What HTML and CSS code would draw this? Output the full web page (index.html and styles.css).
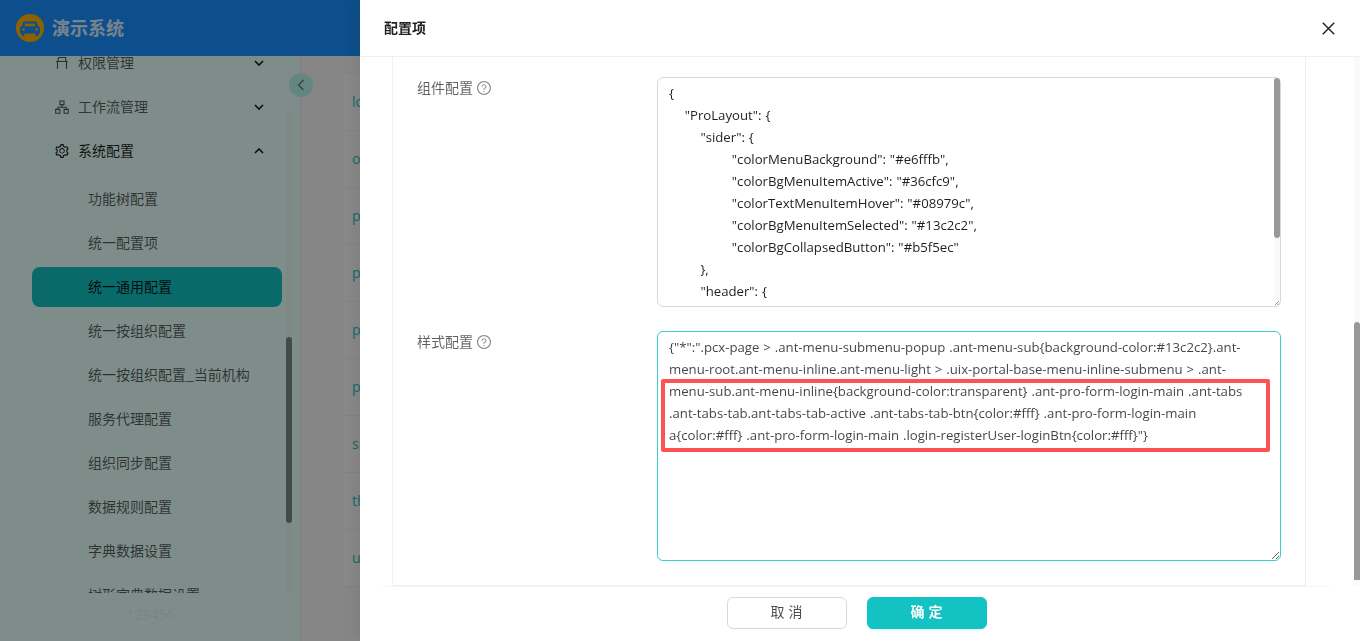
FILE: index.html
```html
<!DOCTYPE html>
<html lang="zh-CN">
<head>
<meta charset="utf-8">
<title>配置项</title>
<link rel="stylesheet" href="styles.css">
</head>
<body>
<div class="app">
  <header class="topbar">
    <svg class="logo" viewBox="0 0 28 28"><circle cx="14" cy="14" r="14" fill="#ffb300"/><path fill="#1890ff" d="M8.6 7.6h10.800c.7 0 1.200.4 1.500 1l1.400 3.700c1 .3 1.700 1.200 1.700 2.300v4.200c0 .4-.3.7-.7.7h-.8v1.600c0 .5-.4.9-.9.9h-1.200c-.5 0-.9-.4-.9-.9v-1.600H8.500v1.600c0 .5-.4.9-.9.9H6.400c-.5 0-.9-.4-.9-.9v-1.600h-.8c-.4 0-.7-.3-.7-.7v-4.200c0-1.100.7-2 1.700-2.300l1.400-3.700c.3-.6.8-1 1.500-1zm.7 1.900-1 2.700h11.400l-1-2.700zM7.500 14.200a1.400 1.400 0 1 0 0 2.800 1.400 1.400 0 0 0 0-2.800zm13 0a1.400 1.400 0 1 0 0 2.800 1.400 1.400 0 0 0 0-2.800z"/></svg>
    <span class="brand">演示系统</span>
  </header>
  <div class="workspace">
    <aside class="sider">
      <nav class="menu-scroll">
        <ul class="menu">
          <li class="menu-group">
            <svg class="menu-icon" viewBox="0 0 14 14"><path d="M3.200 1.500h7.600v4M1 5.500h12M3.200 5.500v-4M2.500 5.500V13M11.500 5.500V13" fill="none" stroke="currentColor" stroke-width="1.100"/></svg>
            <span>权限管理</span>
            <svg class="chev" viewBox="0 0 10 6"><path d="M1 1l4 4 4-4" fill="none" stroke="currentColor" stroke-width="1.700"/></svg>
          </li>
          <li class="menu-group">
            <svg class="menu-icon" viewBox="0 0 14 14"><path d="M5 1h4v3.600H5zM.7 9.400h4.200v3.800H.7zM9.100 9.400h4.200v3.800H9.100zM7 4.600v2.600M2.800 9.400V7.200h8.400v2.200" fill="none" stroke="currentColor" stroke-width="1.100"/></svg>
            <span>工作流管理</span>
            <svg class="chev" viewBox="0 0 10 6"><path d="M1 1l4 4 4-4" fill="none" stroke="currentColor" stroke-width="1.700"/></svg>
          </li>
          <li class="menu-group is-open">
            <svg class="menu-icon" viewBox="64 64 896 896"><path fill="currentColor" d="M924.800 625.700l-65.500-56c3.100-19 4.700-38.400 4.700-57.800s-1.600-38.800-4.700-57.800l65.500-56a32.030 32.030 0 0 0 9.300-35.200l-.9-2.600a443.740 443.740 0 0 0-79.700-137.900l-1.800-2.100a32.120 32.120 0 0 0-35.100-9.500l-81.300 28.900c-30-24.600-63.500-44-99.700-57.600l-15.700-85a32.050 32.050 0 0 0-25.800-25.700l-2.700-.5c-52.100-9.400-106.900-9.400-159 0l-2.700.5a32.050 32.050 0 0 0-25.800 25.700l-15.800 85.400a351.860 351.860 0 0 0-99 57.400l-81.900-29.100a32 32 0 0 0-35.100 9.500l-1.800 2.100a446.020 446.020 0 0 0-79.700 137.900l-.9 2.600c-4.500 12.500-.8 26.500 9.300 35.200l66.300 56.600c-3.100 18.800-4.600 38-4.600 57.100 0 19.200 1.500 38.400 4.600 57.100L99 625.500a32.030 32.030 0 0 0-9.300 35.200l.9 2.600c18.100 50.400 44.900 96.900 79.700 137.900l1.800 2.100a32.120 32.120 0 0 0 35.100 9.500l81.900-29.100c29.800 24.500 63.100 43.900 99 57.400l15.800 85.400a32.050 32.050 0 0 0 25.800 25.700l2.700.5a449.400 449.400 0 0 0 159 0l2.700-.5a32.050 32.050 0 0 0 25.800-25.700l15.700-85a350 350 0 0 0 99.700-57.600l81.300 28.900a32 32 0 0 0 35.100-9.500l1.800-2.100c34.800-41.100 61.600-87.500 79.700-137.900l.9-2.600c4.500-12.300.8-26.300-9.300-35zM788.300 465.900c2.500 15.100 3.800 30.600 3.800 46.100s-1.300 31-3.800 46.100l-6.600 40.100 74.700 63.900a370.030 370.030 0 0 1-42.600 73.600L721 702.800l-31.400 25.800c-23.900 19.600-50.500 35-79.300 45.800l-38.100 14.300-17.900 97a377.500 377.500 0 0 1-85 0l-17.900-97.200-37.800-14.500c-28.500-10.800-55-26.200-78.700-45.700l-31.400-25.900-93.400 33.200c-17-22.900-31.200-47.600-42.600-73.600l75.500-64.500-6.500-40c-2.400-14.900-3.700-30.300-3.700-45.500 0-15.300 1.200-30.600 3.700-45.500l6.500-40-75.500-64.500c11.300-26.100 25.600-50.700 42.600-73.600l93.400 33.200 31.400-25.900c23.700-19.500 50.200-34.900 78.700-45.700l37.900-14.300 17.900-97.200c28.100-3.200 56.800-3.200 85 0l17.900 97 38.100 14.300c28.700 10.800 55.400 26.200 79.300 45.800l31.400 25.800 92.800-32.900c17 22.900 31.200 47.600 42.600 73.600L781.800 426l6.500 39.900zM512 326c-97.200 0-176 78.800-176 176s78.800 176 176 176 176-78.800 176-176-78.800-176-176-176zm83.100 259.100A117.680 117.680 0 0 1 512 619.600c-31.400 0-60.900-12.300-83.100-34.500A117.680 117.680 0 0 1 394.400 502c0-31.400 12.300-60.900 34.500-83.100 22.200-22.200 51.700-34.500 83.100-34.500s60.900 12.300 83.100 34.500A117.680 117.680 0 0 1 629.600 502c0 31.400-12.300 60.900-34.500 83.100z"/></svg>
            <span>系统配置</span>
            <svg class="chev" viewBox="0 0 10 6"><path d="M1 5l4-4 4 4" fill="none" stroke="currentColor" stroke-width="1.700"/></svg>
          </li>
          <li class="menu-item first">功能树配置</li>
          <li class="menu-item">统一配置项</li>
          <li class="menu-item is-selected">统一通用配置</li>
          <li class="menu-item">统一按组织配置</li>
          <li class="menu-item">统一按组织配置_当前机构</li>
          <li class="menu-item">服务代理配置</li>
          <li class="menu-item">组织同步配置</li>
          <li class="menu-item">数据规则配置</li>
          <li class="menu-item">字典数据设置</li>
          <li class="menu-item">树形字典数据设置</li>
        </ul>
      </nav>
      <div class="sider-foot">123456</div>
      <div class="sider-scrollbar"><div class="sider-thumb"></div></div>
      <button class="collapse" type="button" aria-label="收起"><svg viewBox="0 0 8 12"><path d="M6.500 1L1.500 6l5 5" fill="none" stroke="currentColor" stroke-width="1.200"/></svg></button>
    </aside>
    <main class="main">
      <ul class="rows">
        <li>lo</li><li>o</li><li>p</li><li>p</li><li>p</li><li>p</li><li>sr</li><li>th</li><li>u</li>
      </ul>
    </main>
  </div>
</div>
<div class="mask"></div>
<section class="drawer">
  <header class="drawer-head">
    <h2 class="drawer-title">配置项</h2>
    <svg class="close" viewBox="0 0 12 12"><path d="M.7.7l10.600 10.600M11.300.7L.7 11.300" fill="none" stroke="currentColor" stroke-width="1.300"/></svg>
  </header>
  <div class="drawer-body">
    <form class="card">
      <div class="field">
        <label class="field-label"><span class="label-text">组件配置</span>
          <svg class="help" viewBox="64 64 896 896"><path fill="currentColor" d="M512 64C264.600 64 64 264.600 64 512s200.600 448 448 448 448-200.600 448-448S759.400 64 512 64zm0 820c-205.400 0-372-166.600-372-372s166.600-372 372-372 372 166.600 372 372-166.600 372-372 372z"/><path fill="currentColor" d="M623.600 316.700C593.600 290.400 554 276 512 276s-81.600 14.500-111.600 40.700C369.200 344 352 380.700 352 420v7.600c0 4.400 3.600 8 8 8h48c4.400 0 8-3.600 8-8V420c0-44.100 43.100-80 96-80s96 35.900 96 80c0 31.100-22 59.600-56.100 72.700-21.200 8.100-39.200 22.300-52.100 40.900-13.100 19-19.900 41.800-19.900 64.900V620c0 4.400 3.600 8 8 8h48c4.400 0 8-3.600 8-8v-22.700a48.300 48.300 0 0 1 30.900-44.800c59-22.700 97.100-74.700 97.100-132.500.1-39.300-17.100-76-48.300-103.300zM472 732a40 40 0 1 0 80 0 40 40 0 1 0-80 0z"/></svg>
        </label>
        <div class="code-wrap">
          <textarea class="code" spellcheck="false">{
    "ProLayout": {
        "sider": {
                "colorMenuBackground": "#e6fffb",
                "colorBgMenuItemActive": "#36cfc9",
                "colorTextMenuItemHover": "#08979c",
                "colorBgMenuItemSelected": "#13c2c2",
                "colorBgCollapsedButton": "#b5f5ec"
        },
        "header": {
                "colorBgHeader": "#13c2c2",
                "colorHeaderTitle": "#ffffff"
        }
    }
}</textarea>
          <div class="code-scrollbar"><div class="code-thumb"></div></div>
          <svg class="code-grip" viewBox="0 0 6 6"><path d="M1 5l4-4M3.500 5L5 3.500" fill="none" stroke="#777" stroke-width=".8"/></svg>
        </div>
      </div>
      <div class="field">
        <label class="field-label"><span class="label-text">样式配置</span>
          <svg class="help" viewBox="64 64 896 896"><path fill="currentColor" d="M512 64C264.600 64 64 264.600 64 512s200.600 448 448 448 448-200.600 448-448S759.400 64 512 64zm0 820c-205.400 0-372-166.600-372-372s166.600-372 372-372 372 166.600 372 372-166.600 372-372 372z"/><path fill="currentColor" d="M623.600 316.700C593.600 290.400 554 276 512 276s-81.600 14.500-111.600 40.700C369.200 344 352 380.700 352 420v7.600c0 4.400 3.600 8 8 8h48c4.400 0 8-3.600 8-8V420c0-44.100 43.100-80 96-80s96 35.900 96 80c0 31.100-22 59.600-56.100 72.700-21.200 8.100-39.200 22.300-52.100 40.900-13.100 19-19.900 41.800-19.900 64.900V620c0 4.400 3.600 8 8 8h48c4.400 0 8-3.600 8-8v-22.700a48.300 48.300 0 0 1 30.900-44.800c59-22.700 97.100-74.700 97.100-132.500.1-39.300-17.100-76-48.300-103.300zM472 732a40 40 0 1 0 80 0 40 40 0 1 0-80 0z"/></svg>
        </label>
        <div class="code-wrap">
          <textarea class="code is-focus" spellcheck="false">{"*":".pcx-page &gt; .ant-menu-submenu-popup .ant-menu-sub{background-color:#13c2c2}.ant-menu-root.ant-menu-inline.ant-menu-light &gt; .uix-portal-base-menu-inline-submenu &gt; .ant-menu-sub.ant-menu-inline{background-color:transparent} .ant-pro-form-login-main .ant-tabs .ant-tabs-tab.ant-tabs-tab-active .ant-tabs-tab-btn{color:#fff} .ant-pro-form-login-main a{color:#fff} .ant-pro-form-login-main .login-registerUser-loginBtn{color:#fff}"}</textarea>
          <div class="callout"></div>
        </div>
      </div>
    </form>
    <div class="drawer-scrollbar"><div class="drawer-thumb"></div></div>
  </div>
  <footer class="drawer-foot">
    <button class="btn" type="button"><span class="btn-text">取 消</span></button>
    <button class="btn btn-primary" type="button"><span class="btn-text">确 定</span></button>
  </footer>
</section>
</body>
</html>
```
FILE: styles.css
```css
* { box-sizing: border-box; }
html, body { margin: 0; height: 100%; overflow: hidden; }
body {
  font-family: "Open Sans", "Noto Sans CJK SC", sans-serif;
  font-size: 14px;
  color: rgba(0, 0, 0, .88);
  background: #f5f5f5;
}
ul { list-style: none; margin: 0; padding: 0; }

.app { height: 100vh; display: flex; flex-direction: column; }
.topbar { height: 56px; flex: none; background: #1890ff; display: flex; align-items: center; gap: 8px; padding-left: 16px; }
.logo { width: 28px; height: 28px; }
.brand { margin-bottom: 2px; font-size: 18px; font-weight: 700; color: #fff; font-family: "Noto Sans CJK SC", sans-serif; opacity: .85; }

.workspace { flex: 1; min-height: 0; display: flex; }
.sider { width: 301px; flex: none; position: relative; background: #e6fffb; border-right: 1px solid #e8e8e8; display: flex; flex-direction: column; }
.menu-scroll { flex: 1; min-height: 0; overflow: hidden; }
.menu { margin-top: -13px; padding: 0 18px 0 32px; font-family: "Noto Sans CJK SC", sans-serif; color: rgba(0, 0, 0, .65); }
.menu-group { height: 40px; margin-bottom: 4px; padding: 0 18px 0 23px; display: flex; align-items: center; }
.menu-group span { margin: 0 0 2px 9px; flex: 1; }
.menu-group.is-open { color: rgba(0, 0, 0, .88); }
.menu-icon { width: 14px; height: 14px; flex: none; }
.chev { width: 10px; height: 6px; flex: none; color: rgba(0, 0, 0, .88); }
.menu-item { height: 40px; margin-bottom: 4px; padding-left: 56px; line-height: 38px; border-radius: 8px; white-space: nowrap; }
.menu-item.first { margin-top: 8px; }
.menu-item.is-selected { background: #13c2c2; color: rgba(0, 0, 0, .88); }
.sider-foot { height: 48px; flex: none; text-align: center; line-height: 44px; color: rgba(0, 0, 0, .07); }
.sider-scrollbar { position: absolute; left: 286px; top: 56px; width: 6px; height: 481px; border-radius: 3px; background: rgba(0, 0, 0, .02); }
.sider-thumb { margin-top: 225px; height: 186px; border-radius: 3px; background: rgba(0, 0, 0, .45); }
.collapse { position: absolute; left: 289px; top: 17px; width: 24px; height: 24px; padding: 0; border: 0; border-radius: 50%; background: #b5f5ec; color: rgba(0, 0, 0, .5); display: flex; align-items: center; justify-content: center; }
.collapse svg { width: 8px; height: 12px; }

.main { flex: 1; min-width: 0; padding: 17px 0 0 42px; }
.rows { background: #f9f9f9; }
.rows li { height: 57px; line-height: 56px; padding-left: 9px; border-top: 1px solid #f0f0f0; color: #13c2c2; font-size: 14px; }
.rows li:last-child { border-bottom: 1px solid #f0f0f0; height: 58px; }

.mask { position: fixed; inset: 0; background: rgba(0, 0, 0, .45); }
.drawer { position: fixed; top: 0; right: 0; bottom: 0; width: 1000px; background: #fff; display: flex; flex-direction: column; box-shadow: -6px 0 16px rgba(0, 0, 0, .08); }
.drawer-head { height: 57px; flex: none; display: flex; align-items: center; justify-content: space-between; padding: 0 25px 0 24px; border-bottom: 1px solid #f0f0f0; }
.drawer-title { margin: 0 0 2px; font-size: 14px; font-weight: 600; font-family: "Noto Sans CJK SC", sans-serif; }
.close { width: 13px; height: 13px; color: rgba(0, 0, 0, .88); }

.drawer-body { flex: 1; min-height: 0; display: flex; justify-content: space-between; padding-left: 32px; }
.card { width: 914px; padding: 20px 24px 24px; border: 1px solid #f0f0f0; border-top: 0; display: flex; flex-direction: column; gap: 24px; }
.field { display: grid; grid-template-columns: 240px 624px; }
.field-label { display: flex; align-items: center; gap: 4px; height: 22px; color: rgba(0, 0, 0, .62); font-family: "Noto Sans CJK SC", sans-serif; }
.label-text { margin-bottom: 2px; }
.help { width: 14px; height: 14px; color: rgba(0, 0, 0, .45); }
.code-wrap { position: relative; height: 230px; }
.code {
  display: block; width: 624px; height: 230px; padding: 4px 16px 4px 11px;
  border: 1px solid #d9d9d9; border-radius: 6px; outline: 0;
  font: 13.2px/22px "Open Sans", "Noto Sans CJK SC", sans-serif; word-spacing: .5px; color: rgba(0, 0, 0, .88);
  resize: none; overflow: hidden; background: #fff;
}
.code.is-focus { border-color: #36cfc9; resize: both; color: rgba(0, 0, 0, .74); }
.code-scrollbar { position: absolute; right: 1px; top: 1px; width: 6px; height: 222px; background: #fafafa; border-top-right-radius: 5px; }
.code-thumb { height: 160px; border-radius: 3px; background: #999; }
.code-grip { position: absolute; right: 1px; bottom: 1px; width: 6px; height: 6px; }
.callout { position: absolute; left: 4px; top: 48px; width: 609px; height: 73px; border: 4px solid #ff5252; border-radius: 2px; pointer-events: none; }

.drawer-scrollbar { width: 6px; flex: none; background: #fafafa; }
.drawer-thumb { margin-top: 265px; height: 258px; border-radius: 3px 3px 0 0; background: #999; }
.drawer-foot { height: 55px; flex: none; display: flex; justify-content: center; align-items: flex-start; gap: 20px; padding-top: 10px; margin: 0 30px 0 23px; border-top: 1px solid #f5f5f5; }
.btn { width: 120px; height: 32px; padding: 0 0 4px; border: 1px solid #d9d9d9; border-radius: 6px; background: #fff; color: rgba(0, 0, 0, .7); font: 14px "Noto Sans CJK SC", sans-serif; word-spacing: 1px; }
.btn-primary { border-color: #13c2c2; background: #13c2c2; color: #fff; font-weight: 600; box-shadow: 0 2px 0 rgba(5, 255, 230, .1); }
```
